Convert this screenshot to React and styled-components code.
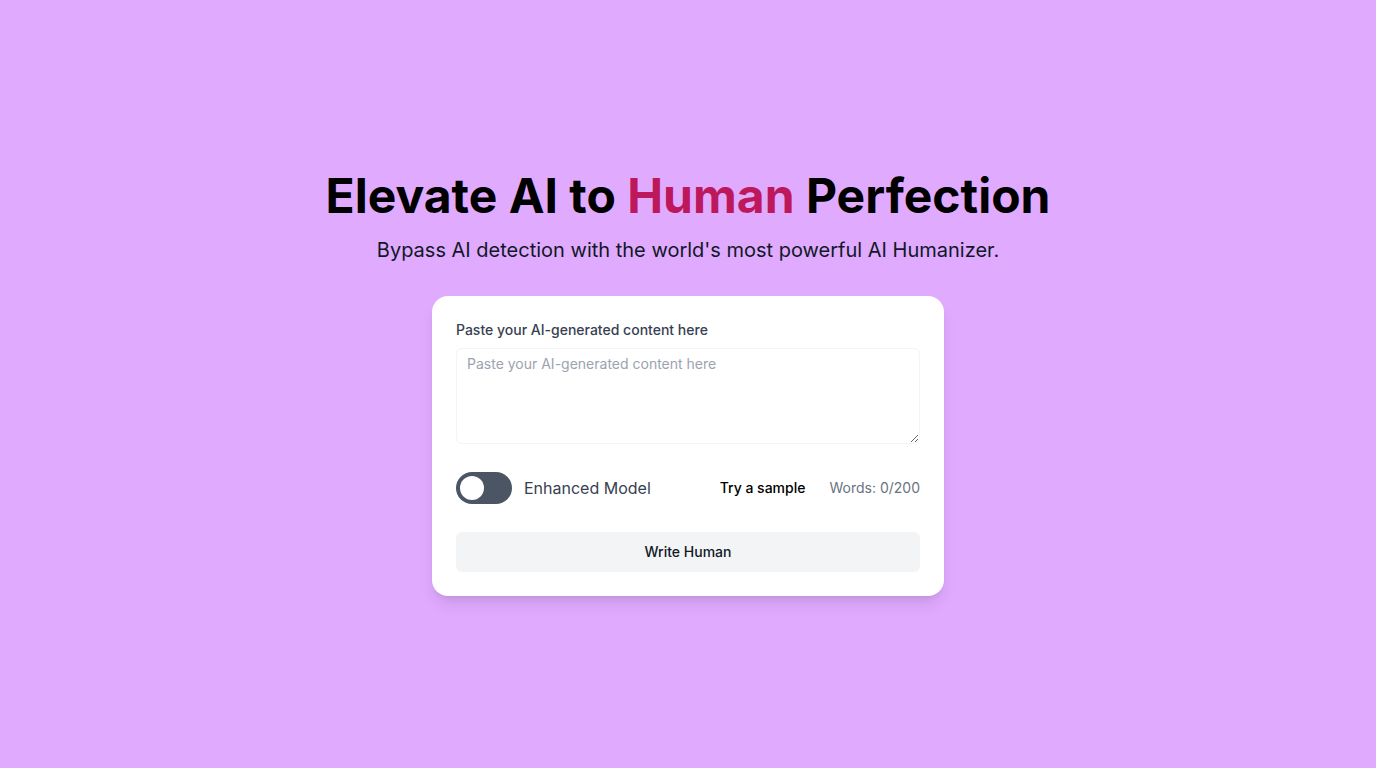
import React, { useState } from "react";
import styled, { createGlobalStyle } from "styled-components";

const Global = createGlobalStyle`
  html, body { margin: 0; padding: 0; }
  body { background: #e0aaff; font-family: Inter, "Noto Sans", sans-serif; }
  * { box-sizing: border-box; }
`;

const Page = styled.main`
  min-height: 100vh;
  display: flex;
  flex-direction: column;
  align-items: center;
  justify-content: center;
  background: #e0aaff;
`;

const Title = styled.h1`
  margin: 0;
  font-size: 48px;
  line-height: 48px;
  font-weight: 700;
  color: #000;
  text-align: center;
`;

const Accent = styled.span`
  color: #be185d;
`;

const Subtitle = styled.p`
  margin: 16px 0 0;
  font-size: 20px;
  line-height: 28px;
  color: #111827;
  text-align: center;
`;

const Card = styled.section`
  margin-top: 32px;
  width: 512px;
  background: #fff;
  border-radius: 16px;
  padding: 24px;
  box-shadow: 0 10px 15px -3px rgba(0,0,0,0.1), 0 4px 6px -4px rgba(0,0,0,0.1);
`;

const Label = styled.label`
  display: block;
  font-size: 14px;
  line-height: 20px;
  font-weight: 500;
  color: #374151;
  margin-bottom: 8px;
`;

const TextArea = styled.textarea`
  display: block;
  width: 100%;
  height: 96px;
  resize: vertical;
  border: 1px solid #f3f4f6;
  border-radius: 6px;
  padding: 5px 10px;
  font-family: inherit;
  font-size: 14px;
  line-height: 20px;
  color: #111827;
  outline: none;
  &::placeholder { color: #9ca3af; }
`;

const Controls = styled.div`
  display: flex;
  align-items: center;
  justify-content: space-between;
  margin-top: 28px;
`;

const ToggleWrap = styled.label`
  display: flex;
  align-items: center;
  gap: 12px;
  cursor: pointer;
`;

const Track = styled.span`
  position: relative;
  width: 56px;
  height: 32px;
  border-radius: 999px;
  background: ${p => (p.$on ? "#be185d" : "#4b5563")};
  transition: background 0.2s;
`;

const Knob = styled.span`
  position: absolute;
  top: 4px;
  left: ${p => (p.$on ? "28px" : "4px")};
  width: 24px;
  height: 24px;
  border-radius: 50%;
  background: #fff;
  transition: left 0.2s;
`;

const ToggleText = styled.span`
  font-size: 16px;
  line-height: 24px;
  color: #374151;
`;

const Right = styled.div`
  display: flex;
  align-items: center;
  gap: 24px;
  line-height: 20px;
  margin-top: -1px;
`;

const SampleButton = styled.button`
  border: none;
  background: none;
  padding: 0;
  font-family: inherit;
  font-size: 14px;
  font-weight: 500;
  color: #000;
  cursor: pointer;
`;

const Count = styled.span`
  font-size: 14px;
  color: #6b7280;
`;

const Submit = styled.button`
  display: block;
  width: 100%;
  height: 40px;
  margin-top: 28px;
  border: none;
  border-radius: 6px;
  background: #f3f4f6;
  font-family: inherit;
  font-size: 14px;
  font-weight: 500;
  color: #111827;
  cursor: pointer;
  padding: 0 0 1px;
`;

export default function App() {
  const [on, setOn] = useState(false);
  const [text, setText] = useState("");
  const words = text.trim() ? text.trim().split(/\s+/).length : 0;
  return (
    <>
      <Global />
      <Page>
        <Title>
          Elevate AI to <Accent>Human</Accent> Perfection
        </Title>
        <Subtitle>Bypass AI detection with the world's most powerful AI Humanizer.</Subtitle>
        <Card>
          <Label htmlFor="content">Paste your AI-generated content here</Label>
          <TextArea
            id="content"
            placeholder="Paste your AI-generated content here"
            value={text}
            onChange={e => setText(e.target.value)}
          />
          <Controls>
            <ToggleWrap onClick={() => setOn(!on)}>
              <Track $on={on}>
                <Knob $on={on} />
              </Track>
              <ToggleText>Enhanced Model</ToggleText>
            </ToggleWrap>
            <Right>
              <SampleButton>Try a sample</SampleButton>
              <Count>Words: {words}/200</Count>
            </Right>
          </Controls>
          <Submit>Write Human</Submit>
        </Card>
      </Page>
    </>
  );
}
